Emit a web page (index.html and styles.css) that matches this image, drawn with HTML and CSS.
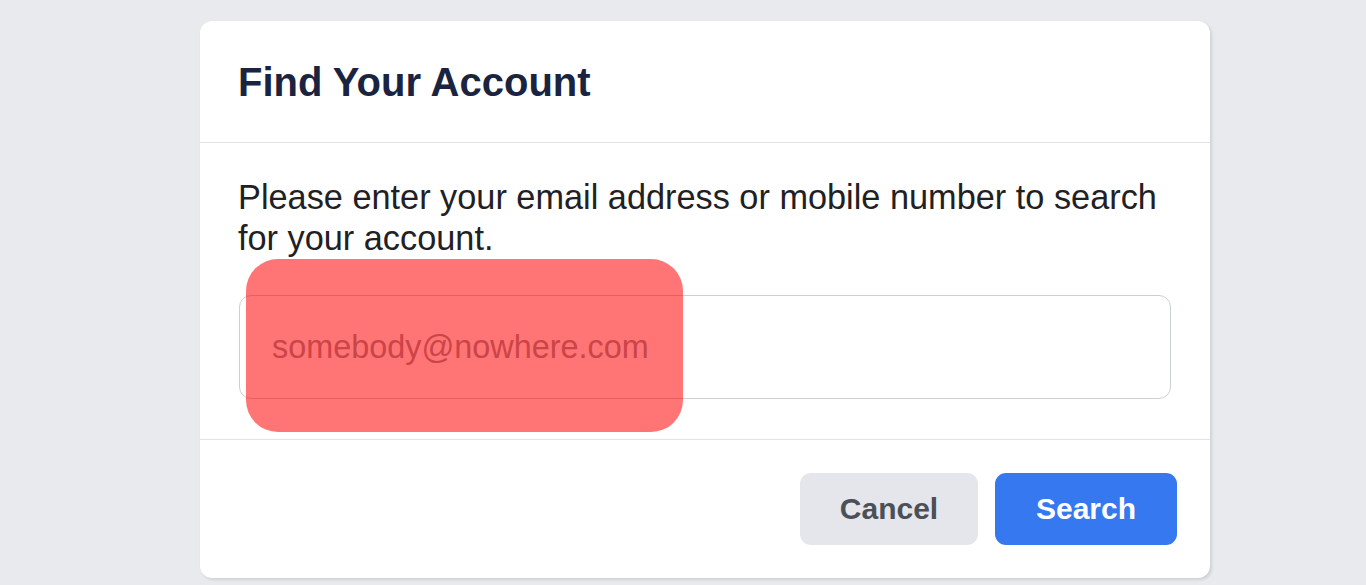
FILE: index.html
```html
<!DOCTYPE html>
<html>
<head>
<meta charset="utf-8">
<link rel="stylesheet" href="styles.css">
</head>
<body>
<div class="page">
  <div class="card">
    <div class="card-header">
      <h2 class="title">Find Your Account</h2>
    </div>
    <div class="card-body">
      <p class="lead">Please enter your email address or mobile number to search for your account.</p>
      <div class="field">
        <div class="input">somebody@nowhere.com</div>
        <div class="redact"></div>
      </div>
    </div>
    <div class="card-footer">
      <button class="btn btn-cancel">Cancel</button>
      <button class="btn btn-search">Search</button>
    </div>
  </div>
</div>
</body>
</html>
```
FILE: styles.css
```css
html, body {
  margin: 0;
  padding: 0;
  background: #e9eaee;
  font-family: "Liberation Sans", Arial, sans-serif;
}
.page {
  padding: 21px 0 0 200px;
  height: 585px;
  box-sizing: border-box;
}
.card {
  width: 1010px;
  height: 557px;
  background: #fff;
  border-radius: 12px;
  box-shadow: 2px 2px 3px rgba(0,0,0,0.1), 0 0 1px rgba(0,0,0,0.08);
  display: flex;
  flex-direction: column;
  box-sizing: border-box;
}
.card-header {
  height: 122px;
  border-bottom: 1px solid #e1e3e7;
  display: flex;
  align-items: center;
  padding-left: 38px;
  box-sizing: border-box;
}
.title {
  margin: 0;
  font-size: 40px;
  font-weight: bold;
  color: #1a2440;
  padding-top: 2px;
}
.card-body {
  padding: 34px 39px 40px 39px;
  border-bottom: 1px solid #e1e3e7;
}
.lead {
  margin: 0 0 36px 0;
  font-size: 34.3px;
  line-height: 41px;
  color: #1f2124;
  margin-left: -1px;
}
.field {
  position: relative;
}
.input {
  height: 104px;
  box-sizing: border-box;
  border: 1px solid #ccd0d5;
  border-radius: 12px;
  padding-left: 32px;
  display: flex;
  align-items: center;
  font-size: 32.4px;
  color: #8d949e;
}
.redact {
  position: absolute;
  left: 7px;
  top: -36px;
  width: 437px;
  height: 173px;
  border-radius: 32px;
  background: rgba(255, 0, 0, 0.54);
}
.card-footer {
  flex: 1;
  display: flex;
  justify-content: flex-end;
  align-items: flex-start;
  gap: 17px;
  padding: 33px 33px 0 0;
}
.btn {
  height: 72px;
  border: none;
  border-radius: 11px;
  font-family: "Liberation Sans", Arial, sans-serif;
  font-weight: bold;
  font-size: 30px;
  cursor: pointer;
}
.btn-cancel {
  width: 178px;
  background: #e4e6eb;
  color: #4b4f56;
}
.btn-search {
  width: 182px;
  background: #3578f0;
  color: #fff;
}
```
